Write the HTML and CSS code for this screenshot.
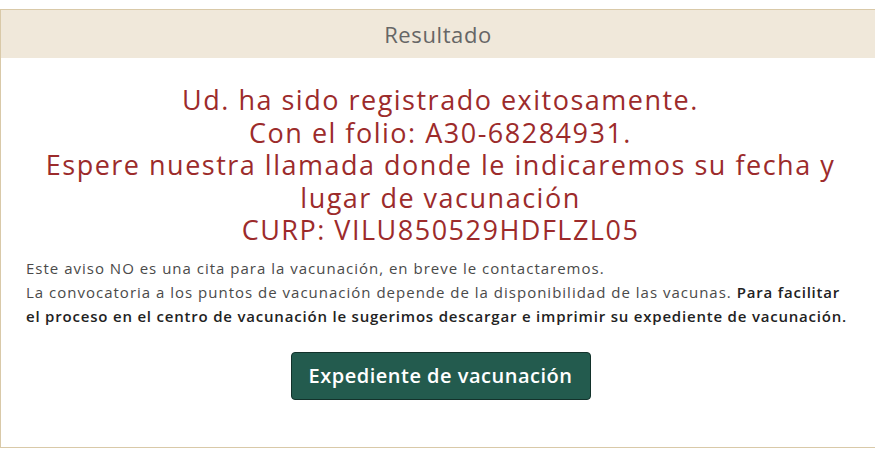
FILE: index.html
```html
<!DOCTYPE html>
<html lang="es">
<head>
<meta charset="utf-8">
<title>Resultado</title>
<link rel="stylesheet" href="styles.css">
</head>
<body>
<section class="panel">
  <header class="panel-heading">Resultado</header>
  <div class="panel-body">
    <h2 class="result"><span class="line">Ud. ha sido registrado exitosamente.</span><span class="line">Con el folio: A30-68284931.</span><span class="line">Espere nuestra llamada donde le indicaremos su fecha y</span><span class="line">lugar de vacunación</span><span class="line">CURP: VILU850529HDFLZL05</span></h2>
    <p class="notice">Este aviso NO es una cita para la vacunación, en breve le contactaremos.<br>La convocatoria a los puntos de vacunación depende de la disponibilidad de las vacunas. <strong>Para facilitar<br>el proceso en el centro de vacunación le sugerimos descargar e imprimir su expediente de vacunación.</strong></p>
    <div class="actions">
      <button class="btn" type="button">Expediente de vacunación</button>
    </div>
  </div>
</section>
</body>
</html>
```
FILE: styles.css
```css
html, body {
  margin: 0;
  background: #fff;
}
body {
  padding-top: 9px;
  font-family: "Open Sans", "Noto Sans", sans-serif;
}
.panel {
  border: 1px solid #d9c9a8;
  border-right: none;
  height: 439px;
  box-sizing: border-box;
}
.panel-heading {
  background: #f0e8da;
  height: 48px;
  display: flex;
  align-items: center;
  justify-content: center;
  font-size: 22px;
  letter-spacing: 0.6px;
  color: #666;
}
.panel-body {
  padding: 26px 20px 0 25px;
}
.result {
  margin: 0;
  text-align: center;
  font-weight: 400;
  font-size: 27px;
  letter-spacing: 1.5px;
  line-height: 32.5px;
  color: #9c2b2b;
}
.result .line {
  display: block;
  height: 32.5px;
}
.notice {
  margin: 9px 0 0;
  font-size: 15px;
  letter-spacing: 1px;
  line-height: 24px;
  color: #4a4a4a;
  white-space: nowrap;
}
.notice strong {
  color: #222;
  font-weight: 600;
  letter-spacing: 0.8px;
}
.actions {
  display: flex;
  justify-content: center;
  margin-top: 24px;
}
.btn {
  font-family: inherit;
  width: 300px;
  height: 48px;
  background: #235b4e;
  border: 1px solid #13322b;
  border-radius: 4px;
  color: #fff;
  font-size: 20px;
  font-weight: 600;
  letter-spacing: 0.5px;
}
```
